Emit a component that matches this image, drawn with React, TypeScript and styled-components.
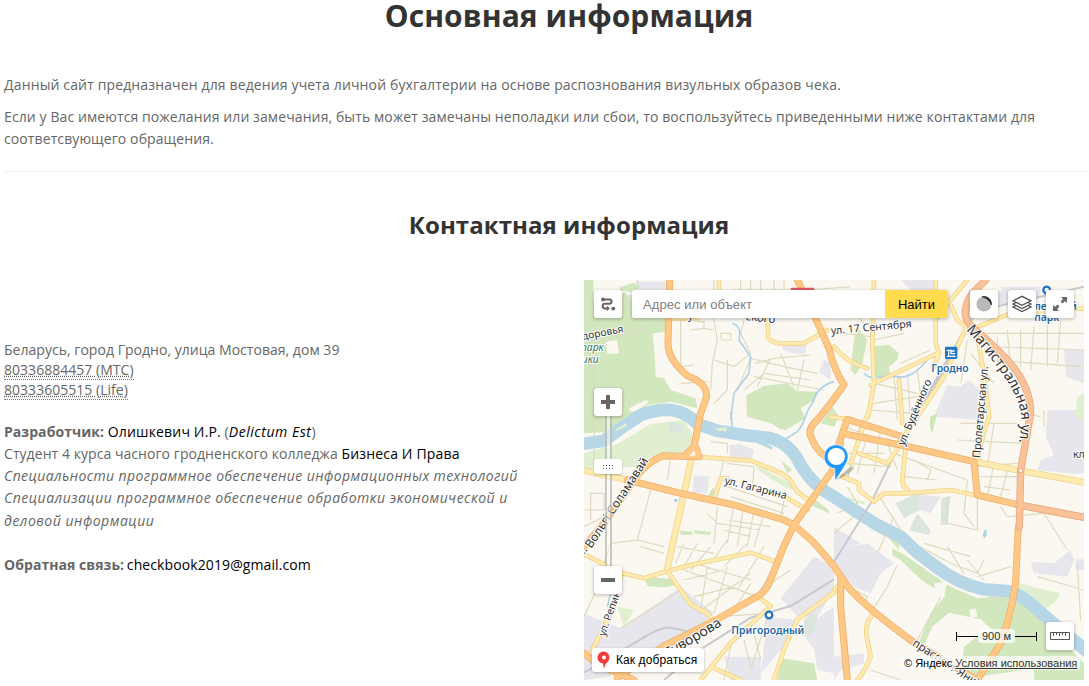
import React from "react";
import styled, { createGlobalStyle } from "styled-components";

const GlobalStyle = createGlobalStyle`
  body { margin: 0; background: #fff; overflow: hidden; }
`;

const Page = styled.main`
  width: 1130px;
  height: 686px;
  padding-left: 4px;
  font: 14px/22px "Open Sans", sans-serif;
  color: #666;
`;
const Title = styled.h1`
  margin: 0;
  font-size: 30px;
  line-height: 31px;
  letter-spacing: 0.08px;
  text-align: center;
  color: #333;
`;
const Intro = styled.section`
  padding-top: 43px;
  padding-bottom: 21px;
  border-bottom: 1px solid #eee;
`;
const Paragraph = styled.p<{ $tracking: number }>`
  margin: 0 0 10px;
  letter-spacing: ${(p) => p.$tracking}px;
  &:last-child { margin: 0; }
`;
const Subtitle = styled.h2`
  margin: 40px 0 0;
  font-size: 24px;
  line-height: 26px;
  letter-spacing: 0.06px;
  text-align: center;
  color: #333;
`;
const Columns = styled.div`
  display: grid;
  grid-template-columns: 565px 500px;
  column-gap: 15px;
  margin-top: 42px;
`;
const Contacts = styled.section`
  padding: 60px 15px 0 0;
  letter-spacing: 0.06px;
`;
const Address = styled.address`
  font-style: normal;
  line-height: 20px;
  letter-spacing: 0.03px;
  margin-bottom: 21px;
`;
const Phone = styled.abbr`
  text-decoration: underline dotted;
  border-bottom: 1px dotted #777;
`;
const Dark = styled.span`
  color: #000;
  letter-spacing: 0.16px;
`;
const Email = styled.span`
  margin-left: -1px;
  color: #000;
  letter-spacing: 0.1px;
`;
const Alias = styled.i`
  color: #000;
  letter-spacing: 0.55px;
`;
const Study = styled.div<{ $tracking: number }>`
  width: 530px;
  font-style: italic;
  line-height: 22.4px;
  letter-spacing: ${(p) => p.$tracking}px;
`;
const Spaced = styled.p`
  margin: 22px 0 0;
`;

const MapFrame = styled.section`
  position: relative;
  width: 500px;
  height: 400px;
  overflow: hidden;
  font: 13px "Liberation Sans", sans-serif;
`;
const MapCanvas = styled.svg`
  display: block;
  width: 500px;
  height: 400px;
`;
const Overlay = styled.div<{ $x: number; $y: number }>`
  position: absolute;
  left: ${(p) => p.$x}px;
  top: ${(p) => p.$y}px;
`;
const Control = styled.button`
  display: flex;
  align-items: center;
  justify-content: center;
  width: 28px;
  height: 28px;
  padding: 0;
  border: 0;
  border-radius: 3px;
  background: #fff;
  box-shadow: 0 1px 3px 1px rgba(0, 0, 0, 0.18);
`;
const Search = styled.form`
  display: flex;
  width: 316px;
  height: 28px;
  border-radius: 3px;
  box-shadow: 0 1px 3px 1px rgba(0, 0, 0, 0.18);
`;
const SearchInput = styled.input`
  width: 253px;
  box-sizing: border-box;
  padding: 0 11px;
  border: 0;
  border-radius: 3px 0 0 3px;
  font: 13px "Liberation Sans", sans-serif;
  letter-spacing: 0.07px;
  background: #fff;
  &::placeholder { color: #808080; }
`;
const SearchButton = styled.button`
  flex: 1;
  padding: 0;
  border: 0;
  border-radius: 0 3px 3px 0;
  background: #ffdb4d;
  font: 13px "Liberation Sans", sans-serif;
  color: #000;
`;
const ZoomTrack = styled.div`
  width: 7px;
  height: 152px;
  box-sizing: border-box;
  border: solid rgba(150, 150, 140, 0.5);
  border-width: 0 2px;
  background: rgba(255, 255, 255, 0.5);
`;
const ZoomHandle = styled.div`
  display: flex;
  align-items: center;
  justify-content: center;
  width: 28px;
  height: 15px;
  border-radius: 3px;
  background: #fff;
  box-shadow: 0 1px 2px rgba(0, 0, 0, 0.25);
`;
const RouteButton = styled.button`
  display: flex;
  align-items: center;
  gap: 5px;
  width: 112px;
  height: 24px;
  padding: 0 0 0 5px;
  border: 0;
  border-radius: 3px;
  background: #fff;
  box-shadow: 0 1px 3px rgba(0, 0, 0, 0.25);
  font: 12px "Liberation Sans", sans-serif;
  letter-spacing: 0.09px;
  white-space: nowrap;
  color: #000;
`;
const Scale = styled.div`
  display: flex;
  align-items: center;
  width: 81px;
  height: 14px;
`;
const ScaleArm = styled.span<{ $end?: boolean }>`
  flex: 1;
  height: 9px;
  border: solid #000;
  border-width: ${(p) => (p.$end ? "0 1px 0 0" : "0 0 0 1px")};
  background: linear-gradient(#000, #000) center / 100% 1px no-repeat;
`;
const ScaleLabel = styled.span`
  width: 37px;
  border-radius: 3px;
  background: rgba(255, 255, 255, 0.7);
  font-size: 11px;
  line-height: 14px;
  text-align: center;
  color: #333;
`;
const Copyright = styled.div`
  padding: 0 3px 0 4px;
  border-radius: 3px;
  background: rgba(255, 255, 255, 0.7);
  font-size: 11px;
  line-height: 14px;
  white-space: nowrap;
  color: #000;
`;
const Terms = styled.span`
  color: #333;
  text-decoration: underline;
`;
const Label = styled.text<{ $size?: number; $tone?: string; $bold?: boolean }>`
  font-family: "Noto Sans", sans-serif;
  font-size: ${(p) => p.$size ?? 31}px;
  font-weight: ${(p) => (p.$bold ? 600 : 400)};
  fill: ${(p) => p.$tone ?? "#333"};
  stroke: #fff;
  stroke-width: 6px;
  stroke-linejoin: round;
  paint-order: stroke;
`;

// Geometry is in map units: three units per screen pixel.
const greens = [
  "M0 0H28V60H100L120 35 145 60V115L245 110V190L210 180 215 290 240 295 260 330 335 355 340 385 262 365 190 375 100 455 0 460Z",
  "M105 22L150 8 170 22 140 35 110 32Z",
  "M487 346L540 318 610 310 640 333 700 335 690 360 650 385 665 415 605 450 590 448 560 430 488 410Z",
  "M740 30H790V50L745 40Z",
  "M860 200L915 194 945 220 940 240 915 260 920 290 870 295Z",
  "M820 140L850 180 835 250 815 285 800 270 810 180Z",
  "M745 380L765 410 750 440 710 430Z",
  "M1038 410L1060 400 1045 460 1038 445Z",
  "M180 890L275 898 280 915 240 922 190 918Z",
  "M925 805L970 830 1040 880 1100 920 1180 955 1285 945 1350 990 1410 1050 1480 1130 1500 1150V1200H1350V1165L1180 1190 1150 1200 1000 1100 1040 1000 1085 945 1060 930 1020 905 990 880 950 840 925 825Z",
  "M865 730L900 735 950 770 945 810 910 770 860 745Z",
  "M375 640L390 620V660L370 655Z",
  "M288 752L325 755 325 765 290 765Z M330 750L380 756 380 764 335 762Z",
  "M590 1135L690 1150 700 1200H580Z",
  "M590 540L625 570 610 580Z M675 645L735 690 735 700 680 675Z",
];
const paleGreens = [
  "M0 520L100 492 200 432 300 420 335 480 310 515 200 530 160 560 0 570Z",
  "M1310 910L1360 925 1430 940 1410 970 1350 1010 1300 980 1285 940Z",
  "M1480 350L1500 340V430L1475 405Z",
  "M790 650L840 665 845 675 800 662Z M100 980L150 990 120 1040Z",
  "M515 555L620 610 640 630 600 620 520 570Z",
];
const creams = [
  "M1018 1100L1045 1040 1095 998 1190 1018 1225 1050 1180 1070 1140 1100 1130 1200H1150L1000 1110Z",
  "M205 160L245 155 240 290 220 288Z M65 185L100 180 105 220 70 222Z",
  "M135 385L185 360 195 365 160 392 138 395Z M1155 990L1175 985 1180 1010 1160 1012Z",
  "M1050 910L1090 905 1080 945 1060 960Z",
];
const greys = [
  "M160 5H245V60H170Z M115 45H148V105H118Z M35 110L95 115 93 140H35Z",
  "M595 192L670 190 662 222 625 220 598 210Z M720 240L740 245V300L705 275Z",
  "M435 495L470 492 510 510 505 535 440 530Z M330 585L375 590 370 640 325 640Z",
  "M1390 390H1500V580L1470 582 1360 570 1370 540 1410 525 1385 470Z",
  "M1050 410L1090 315 1130 320 1155 300 1210 350 1190 420Z",
  "M1150 50L1320 20 1340 55 1240 75 1160 110Z M1440 210H1500V310L1445 290Z",
  "M0 1000L110 1045 290 920 390 1000 300 1090 70 1190 0 1200Z",
  "M590 955L650 880 690 830 750 860V930L700 1010 640 1010Z M550 1010L640 1020 590 1110 530 1180Z",
  "M650 1050L750 980V1180L700 1170 690 1110Z",
  "M790 800L850 790 930 850 890 880 860 940 810 920 770 880 750 850V740L830 790Z",
  "M980 640L1070 650 1040 700 1010 690Z",
  "M1340 845L1410 850 1460 810 1470 840 1450 890 1350 880Z M1475 838H1500V870H1475Z",
  "M750 1130L840 1120V1150L770 1170 750 1200Z",
  "M950 0H1060V30H980Z M1250 20H1370V50H1260Z",
  "M420 1130H530V1200H440Z",
];
const parks = [
  "M935 670L1000 640 1007 690 960 715Z M1000 700L1040 750 1035 765 975 750Z",
  "M1072 655L1100 648 1090 735 1070 735Z M255 425L300 435 298 460 255 455Z M660 1020L685 995 700 1010 690 1060 655 1070Z",
];
const streets = [
  "M160 0V60M290 120V280M30 60V560M390 0V120L400 180 385 250 380 330M320 150L360 145 390 150M340 125H360V145M290 260L330 255M290 310L370 305M250 120L100 170 30 150",
  "M410 160H440V180H412ZM390 240L450 260 500 220 470 160 480 120M430 240V330L390 370M460 330L500 235M500 235L600 260 700 280M515 250L570 235 680 225M480 330L540 280 680 300M510 290L720 330M590 220L630 320M560 235L520 320M660 240L640 330",
  "M440 30H640M445 60H650M470 0V100M500 0V110M530 0V110M570 0V110M600 0V110M670 30L800 20M680 70L750 40",
  "M770 110L860 80M790 70L840 130M780 160L860 170M870 180L960 160M950 250L1040 210M870 310L1000 340M930 290L940 420M970 280L980 420M1000 270L1010 350M870 370L1000 350M860 390L990 400",
  "M1200 160H1500M1210 200L1500 210M1220 240L1490 260M1240 170V250M1270 150L1280 270M1310 150V260M1350 140L1340 270M1390 130V260M1430 120L1420 250M1150 180L1130 310M1160 220L1230 310",
  "M200 630L160 780 80 790 60 850M260 530L250 600M0 690H60V640H20V720M0 740L80 700M160 780L240 800M380 485L430 490V520M240 820L170 800",
  "M420 540L400 620M430 550L510 560 505 630M430 620L610 680M440 650L600 700M450 670L430 790M480 670L460 800M510 690L490 800M540 700L510 800M400 680L390 790M370 700L400 730 530 750M420 750L500 770M430 720L560 740M600 660L590 720",
  "M300 790L275 850M340 790L300 860M380 800L320 870M430 780L380 850M490 790L420 860M540 800L460 930M590 820L520 950M280 800L390 820M300 870L520 950M330 850L500 900M370 860L350 990M430 860L390 1000M300 900L420 870M330 950L450 920M500 910L450 990M340 1000L500 880",
  "M480 1080L500 1160M510 1060L530 1140M440 1100L420 1200M560 980L500 1170M400 1010L550 1000M110 1045L290 930M60 880L0 1010M620 870L560 910M20 1100L80 1190",
  "M780 440L860 470M830 430L790 600M850 460L820 580M890 450L870 580M780 520H900M790 550L920 560M910 490L940 570M930 520L1150 600M1150 600L1140 700 1170 740M1090 650V730L1180 750V650M1170 560L1300 550M1190 590H1300M1200 620L1280 630M1230 550L1210 650M1270 570L1250 650",
  "M990 540L1040 570 1030 600M960 590L1060 600M1250 680L1270 710 1380 700 1450 810M880 640L970 780 1100 850 1180 880 1200 840M1020 790L1160 830M1090 800L1140 880M1150 840L1200 900M1180 890L1280 860M1360 890L1500 930M1480 850L1490 1020M1170 930L1270 970",
  "M940 855L910 920 860 1000M1070 950L1000 1080M780 915L850 950 840 980M860 1170L950 1200M760 700L820 670 790 620M750 760L820 700M880 740L970 790M930 710L880 820M1130 430H1300M1120 480L1310 490M1190 420V560M1230 430L1210 560M1320 400L1370 410M1380 390V440",
];
const yellowRoads = [
  "M330 530L500 542 570 570Q620 590 630 620L640 635 680 665",
  "M390 660L410 595 430 595M610 655L670 690", "M550 115L553 175Q570 190 590 190H660L730 150",
  "M405 0V100M257 115L340 115", "M870 0L865 190 870 310 853 410M855 390L800 550", "M1055 0V190L1065 220 1050 260M860 315L1060 220",
  "M750 200Q790 250 850 265", "M1095 65L1120 120 1145 140M1095 65L1150 0",
  "M1170 145L1280 100 1500 85", "M1145 145L1080 290 940 500", "M945 300L955 430",
  "M1180 170L1200 280 1215 410 1175 540", "M950 495L910 550 825 520",
  "M965 500L955 600Q955 620 970 628", "M775 590L825 610V630L870 665 900 640H965L1100 630 1180 647",
  "M0 823L110 878 180 895 250 873 330 853 500 818 570 843",
  "M250 873L320 973 370 1000 390 1023", "M525 953L560 978 440 1088 350 1200",
  "M750 938L640 1018 600 1108 570 1200", "M860 1010Q840 1040 850 1080L860 1130Q840 1180 820 1200",
  "M110 890L90 980 20 1120M380 1160L470 1200", "M750 930L770 910", "M740 410L800 420",
];
const wideYellowRoads = ["M330 500L300 640 250 865", "M0 572L130 600", "M1170 545L1310 572 1500 607"];
const orangeRoads = [
  "M257 0L252 190Q252 240 310 287Q370 310 368 350L350 400 330 500",
  "M0 800L60 730 130 630Q180 545 240 527L335 530", "M330 500L305 525M335 500L345 530",
  "M130 600L290 640 450 675 600 720 630 735",
  "M640 0L690 105 735 205Q750 270 780 315L740 370 700 420Q665 450 685 480Q700 520 750 545",
  "M770 490L750 565 700 635 630 735 600 798 560 898Q545 940 510 955L400 1018 240 1098 100 1193",
  "M765 490L790 418 950 468 965 498M775 460L950 495 1170 545 1180 645 1305 675 1500 712",
  "M630 735L690 788 750 858 790 918Q830 970 990 1088L1180 1200",
  "M770 900L770 980 790 1200", "M1303 740L1300 798 1295 908Q1280 1010 1250 1090L1180 1200", "M0 1120L45 1155 150 1200",
];
const peachRoads = ["M1205 0L1165 40Q1125 100 1160 135L1240 210Q1340 300 1340 400L1310 570 1306 740", "M1305 675L1500 712"];
const rails = ["M1150 140L1090 245 945 495 860 670 750 845", "M1140 140L1190 90 1350 55 1500 20", "M750 898L620 978 500 1013 350 1108 240 1200M0 1178L170 1078Q230 1040 260 1043L330 1058"];
const streams = ["M445 130Q475 140 465 180L500 230 495 280 450 340 440 420", "M440 395L445 440", "M670 395Q655 440 640 455L600 480", "M750 305Q700 320 690 360L670 395", "M840 280Q860 300 890 290L940 290Q980 300 1030 240", "M750 200L780 235M1060 120L1090 90", "M80 940L70 980"];

const Roads = ({ paths, color, edge, width }: { paths: string[]; color: string; edge: string; width: number }) => (
  <g fill="none" strokeLinejoin="round" strokeLinecap="round">
    <path d={paths.join("")} stroke={edge} strokeWidth={width} />
    <path d={paths.join("")} stroke={color} strokeWidth={width - 5} />
  </g>
);

const CityMap = () => (
  <MapCanvas viewBox="0 0 1500 1200">
    <rect width="1500" height="1200" fill="#fbf8f1" />
    <path d={greys.join("")} fill="#e7e6ed" />
    <path d={paleGreens.join("")} fill="#dfefd0" />
    <path d={greens.join("")} fill="#d2e7bd" />
    <path d={creams.join("")} fill="#fbf8f1" />
    <path d={parks.join("")} fill="#dae5de" />
    <path d={streets.join("")} fill="none" stroke="#dedabf" strokeWidth="3.5" />
    <path d={streams.join("")} fill="none" stroke="#add3e7" strokeWidth="5" />
    <path
      d="M-10 492L60 482 110 445 170 405Q215 387 262 390Q310 397 340 432L400 452 480 465 560 475Q620 490 650 555Q690 620 750 650L810 690 880 735 950 770 1000 818 1060 863Q1120 910 1200 928L1270 933Q1300 940 1330 963L1400 1023 1510 1115"
      fill="none" stroke="#b8d7e6" strokeWidth="38" strokeLinejoin="round"
    />
    <path d="M440 462L500 475 565 505" fill="none" stroke="#b8d7e6" strokeWidth="9" />
    <path d="M1200 752L1208 748V765L1202 774 1196 768Z" fill="#add3e7" />
    <path d="M92 450L125 430 130 437 100 452ZM392 445L430 442 428 454 400 452Z" fill="#dfefd0" />
    <path d={rails.join("")} fill="none" stroke="#c8c8cf" strokeWidth="6" />
    <path d="M1150 140L1090 245 1030 350" fill="none" stroke="#c8c8cf" strokeWidth="12" />
    <Roads paths={yellowRoads} color="#feebaf" edge="#f2d28b" width={14} />
    <Roads paths={wideYellowRoads} color="#feebaf" edge="#f2d28b" width={20} />
    <Roads paths={orangeRoads} color="#ffc884" edge="#efb170" width={21} />
    <Roads paths={peachRoads} color="#f9c298" edge="#eba980" width={22} />
    <circle cx="1310" cy="572" r="6" fill="#fff" stroke="#e9a47b" strokeWidth="3" />
    <path d="M330 510L315 530 335 525Z" fill="#fbf8f1" />
    <rect x="620" y="23" width="71" height="30" rx="4" fill="#e25565" />
    <circle cx="275" cy="661" r="5" fill="#9dcbe8" />

    <Label x="484" y="120" $size={34} transform="rotate(6 484 120)">ского</Label>
    <Label x="312" y="118">у</Label>
    <Label x="-19" y="183" transform="rotate(-11 -19 183)">здоровья</Label>
    <Label x="-9" y="214" $tone="#387451" fontStyle="italic">парк</Label>
    <Label x="-24" y="250" $tone="#387451" fontStyle="italic">лики</Label>
    <Label x="742" y="163" $size={32} transform="rotate(-5 742 163)">ул. 17 Сентября</Label>
    <Label x="420" y="611" $size={32} transform="rotate(14 420 611)">ул. Гагарина</Label>
    <Label x="22" y="807" $size={36} transform="rotate(-57 22 807)">Вольгі Соламавай</Label>
    <Label x="-8" y="833" $size={36} transform="rotate(-50 -8 833)">л.</Label>
    <Label x="62" y="1070" transform="rotate(-70 62 1070)">ул. Репина</Label>
    <Label x="249" y="1136" $size={42} transform="rotate(-31 249 1136)">Суворова</Label>
    <Label x="960" y="499" $size={32} transform="rotate(-67 960 499)">ул. Будённого</Label>
    <Label x="1188" y="535" $size={33} transform="rotate(-85 1188 535)">Пролетарская ул.</Label>
    <path id="avenue" d="M1146 150C1228 240 1304 330 1312 410Q1314 440 1300 520" fill="none" />
    <Label $size={43}><textPath href="#avenue">Магистральная ул.</textPath></Label>
    <Label x="983" y="1095" $size={34} transform="rotate(33 983 1095)">праспект Янкі</Label>
    <Label x="1467" y="534">кл</Label>
    <Label x="442" y="1061" $tone="#2367a8" $bold>Пригородный</Label>
    <Label x="1042" y="275" $tone="#2367a8" $bold>Гродно</Label>
    <Label x="1328" y="89" $tone="#2367a8" $bold>Олесский</Label>
    <Label x="1351" y="124" $tone="#2367a8" $bold>парк</Label>
    <circle cx="555" cy="1005" r="10" fill="#fff" stroke="#2376c4" strokeWidth="7" />
    <circle cx="1388" cy="30" r="10" fill="#fff" stroke="#2376c4" strokeWidth="7" />
    <rect x="1083" y="200" width="37" height="37" rx="4" fill="#2376c4" />
    <path d="M1088 211H1103M1094 211V227M1112 213H1101V221H1113M1089 229H1115" fill="none" stroke="#fff" strokeWidth="4" />

    <path d="M756 600L788 569Q815 550 808 566Q795 585 756 600Z" fill="#6f6655" opacity=".4" />
    <path d="M753 603L752 566A36 36 0 1 1 787 549Q774 572 753 603Z" fill="#1e98ff" stroke="#fff" strokeWidth="2" />
    <circle cx="757" cy="529" r="26" fill="#fff" />
  </MapCanvas>
);

const RouteIcon = () => (
  <svg width="16" height="16" viewBox="0 0 16 16" fill="none" stroke="#666" strokeWidth="2">
    <path d="M3 3.5h6.5a2.1 2.1 0 0 1 0 4.2H5a2.4 2.4 0 0 0 0 4.8h3" />
    <circle cx="3" cy="3.5" r="1.9" fill="#666" stroke="none" />
    <circle cx="13.3" cy="12.6" r="1.9" fill="#666" stroke="none" />
    <path d="M6.8 9.8L9.8 12.5l-3 2.7z" fill="#666" stroke="none" />
  </svg>
);

export default function App() {
  return (
    <>
      <GlobalStyle />
      <Page>
        <Title>Основная информация</Title>
        <Intro>
          <Paragraph $tracking={0.138}>Данный сайт предназначен для ведения учета личной бухгалтерии на основе распознования визульных образов чека.</Paragraph>
          <Paragraph $tracking={0.1}>Если у Вас имеются пожелания или замечания, быть может замечаны неполадки или сбои, то воспользуйтесь приведенными ниже контактами для соответсвующего обращения.</Paragraph>
        </Intro>
        <Subtitle>Контактная информация</Subtitle>
        <Columns>
          <Contacts>
            <Address>
              Беларусь, город Гродно, улица Мостовая, дом 39<br />
              <Phone>80336884457 (МТС)</Phone><br />
              <Phone>80333605515 (Life)</Phone>
            </Address>
            <div><b>Разработчик:</b> <Dark>Олишкевич И.Р.</Dark> (<Alias>Delictum Est</Alias>)</div>
            <div>Студент 4 курса часного гродненского колледжа <Dark>Бизнеса И Права</Dark></div>
            <Study $tracking={0.41}>Специальности программное обеспечение информационных технологий</Study>
            <Study $tracking={0.51}>Специализации программное обеспечение обработки экономической и деловой информации</Study>
            <Spaced><b>Обратная связь:</b> <Email>checkbook2019@gmail.com</Email></Spaced>
          </Contacts>
          <MapFrame>
            <CityMap />
            <Overlay $x={10} $y={10}><Control><RouteIcon /></Control></Overlay>
            <Overlay $x={48} $y={10}>
              <Search>
                <SearchInput placeholder="Адрес или объект" />
                <SearchButton type="button">Найти</SearchButton>
              </Search>
            </Overlay>
            <Overlay $x={386} $y={10}>
              <Control>
                <svg width="18" height="18" viewBox="0 0 18 18">
                  <circle cx="9" cy="9" r="7.6" fill="#b9b9b9" />
                  <path d="M7 1.7A7.5 7.5 0 0 1 16.4 10Q14 3.5 7 1.7z" fill="#222" stroke="#222" strokeWidth=".6" />
                </svg>
              </Control>
            </Overlay>
            <Overlay $x={424} $y={10}>
              <Control>
                <svg width="20" height="18" viewBox="0 0 20 18" fill="#fff" stroke="#555" strokeWidth="1.3">
                  <path d="M1 12l9-4.5 9 4.5-9 4.5z" /><path d="M1 9l9-4.5L19 9l-9 4.5z" /><path d="M1 5.8l9-4.5 9 4.5-9 4.5z" />
                </svg>
              </Control>
            </Overlay>
            <Overlay $x={462} $y={10}>
              <Control>
                <svg width="16" height="16" viewBox="0 0 16 16" fill="#666">
                  <path d="M9 1h6v6l-2-2-2.5 2.5-2-2L11 3zM7 15H1V9l2 2 2.5-2.5 2 2L5 13z" />
                </svg>
              </Control>
            </Overlay>
            <Overlay $x={21} $y={135}><ZoomTrack /></Overlay>
            <Overlay $x={10} $y={108}>
              <Control><svg width="14" height="14"><path d="M7 0v14M0 7h14" stroke="#666" strokeWidth="4" /></svg></Control>
            </Overlay>
            <Overlay $x={10} $y={179}>
              <ZoomHandle>
                <svg width="10" height="4" fill="#555"><path d="M0 0h1v1H0zM3 0h1v1H3zM6 0h1v1H6zM9 0h1v1H9zM0 3h1v1H0zM3 3h1v1H3zM6 3h1v1H6zM9 3h1v1H9z" /></svg>
              </ZoomHandle>
            </Overlay>
            <Overlay $x={10} $y={286}>
              <Control><svg width="14" height="4"><path d="M0 2h14" stroke="#666" strokeWidth="4" /></svg></Control>
            </Overlay>
            <Overlay $x={8} $y={368}>
              <RouteButton>
                <svg width="14" height="18" viewBox="0 0 14 18"><path d="M7 18L6 12.5A6 6 0 1 1 10.5 11Q8 13 7 18z" fill="#f43a3a" /><circle cx="7" cy="6.5" r="2" fill="#fff" /></svg>
                Как добраться
              </RouteButton>
            </Overlay>
            <Overlay $x={372} $y={349}>
              <Scale><ScaleArm /><ScaleLabel>900 м</ScaleLabel><ScaleArm $end /></Scale>
            </Overlay>
            <Overlay $x={462} $y={342}>
              <Control>
                <svg width="20" height="8" viewBox="0 0 20 8" fill="none" stroke="#555"><path d="M.5.5h19v7H.5zM3.5 1v3M6.5 1v2M9.5 1v3M12.5 1v2M15.5 1v3" /></svg>
              </Control>
            </Overlay>
            <Overlay $x={316} $y={376}>
              <Copyright>© Яндекс <Terms>Условия использования</Terms></Copyright>
            </Overlay>
          </MapFrame>
        </Columns>
      </Page>
    </>
  );
}
